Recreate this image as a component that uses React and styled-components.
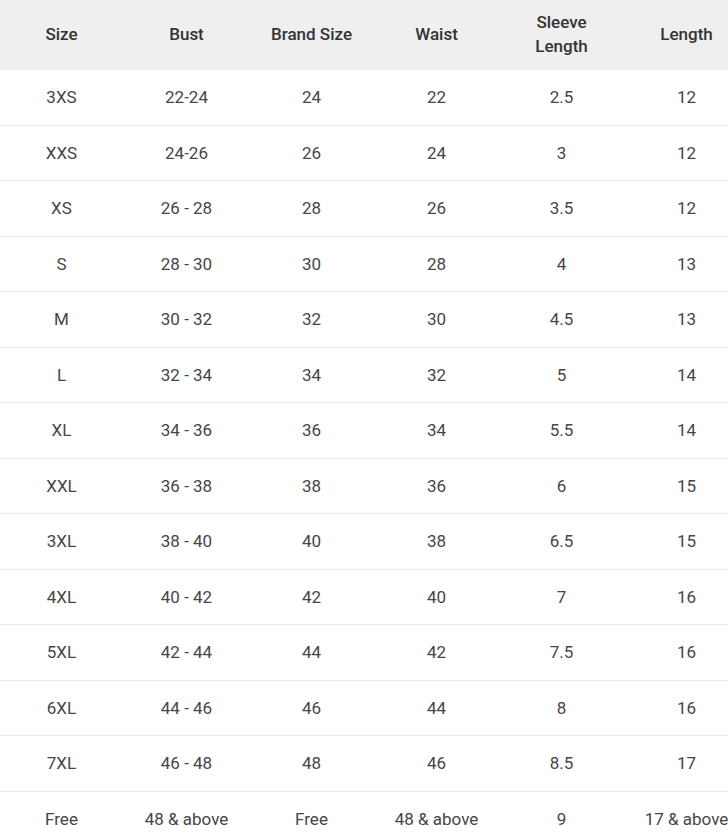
import React from 'react'
import styled, {createGlobalStyle} from 'styled-components'

const headers = ['Size', 'Bust', 'Brand Size', 'Waist', 'Sleeve Length', 'Length']

const rows = [
  ['3XS', '22-24', '24', '22', '2.5', '12'],
  ['XXS', '24-26', '26', '24', '3', '12'],
  ['XS', '26 - 28', '28', '26', '3.5', '12'],
  ['S', '28 - 30', '30', '28', '4', '13'],
  ['M', '30 - 32', '32', '30', '4.5', '13'],
  ['L', '32 - 34', '34', '32', '5', '14'],
  ['XL', '34 - 36', '36', '34', '5.5', '14'],
  ['XXL', '36 - 38', '38', '36', '6', '15'],
  ['3XL', '38 - 40', '40', '38', '6.5', '15'],
  ['4XL', '40 - 42', '42', '40', '7', '16'],
  ['5XL', '42 - 44', '44', '42', '7.5', '16'],
  ['6XL', '44 - 46', '46', '44', '8', '16'],
  ['7XL', '46 - 48', '48', '46', '8.5', '17'],
  ['Free', '48 & above', 'Free', '48 & above', '9', '17 & above'],
]

function App() {
  return (
    <>
      <GlobalStyle />
      <Table>
        <HeadRow>
          {headers.map(h => (
            <HeadCell key={h}>{h}</HeadCell>
          ))}
        </HeadRow>
        {rows.map(row => (
          <Row key={row[0]}>
            {row.map((value, i) => (
              <Cell key={i}>{value}</Cell>
            ))}
          </Row>
        ))}
      </Table>
    </>
  )
}

export default App

const GlobalStyle = createGlobalStyle`
  html, body {
    margin: 0;
    padding: 0;
    background: #fff;
    overflow: hidden;
  }
  body {
    font-family: Roboto, "Liberation Sans", sans-serif;
  }
`

const Table = styled.div`
  width: 750px;
  margin-left: -1px;
`

const HeadRow = styled.div`
  display: grid;
  grid-template-columns: repeat(6, 125px);
  height: 70px;
  background: #efefef;
`

const HeadCell = styled.div`
  display: flex;
  align-items: center;
  justify-content: center;
  text-align: center;
  padding: 0 16px 2px;
  font-size: 17px;
  font-weight: 500;
  line-height: 24px;
  color: #333;
`

const Row = styled.div`
  display: grid;
  grid-template-columns: repeat(6, 125px);
  height: 55.5px;
  box-sizing: border-box;
  border-bottom: 1px solid #eaeaea;
`

const Cell = styled.div`
  display: flex;
  align-items: center;
  justify-content: center;
  font-size: 17px;
  color: #464646;
  white-space: nowrap;
`
